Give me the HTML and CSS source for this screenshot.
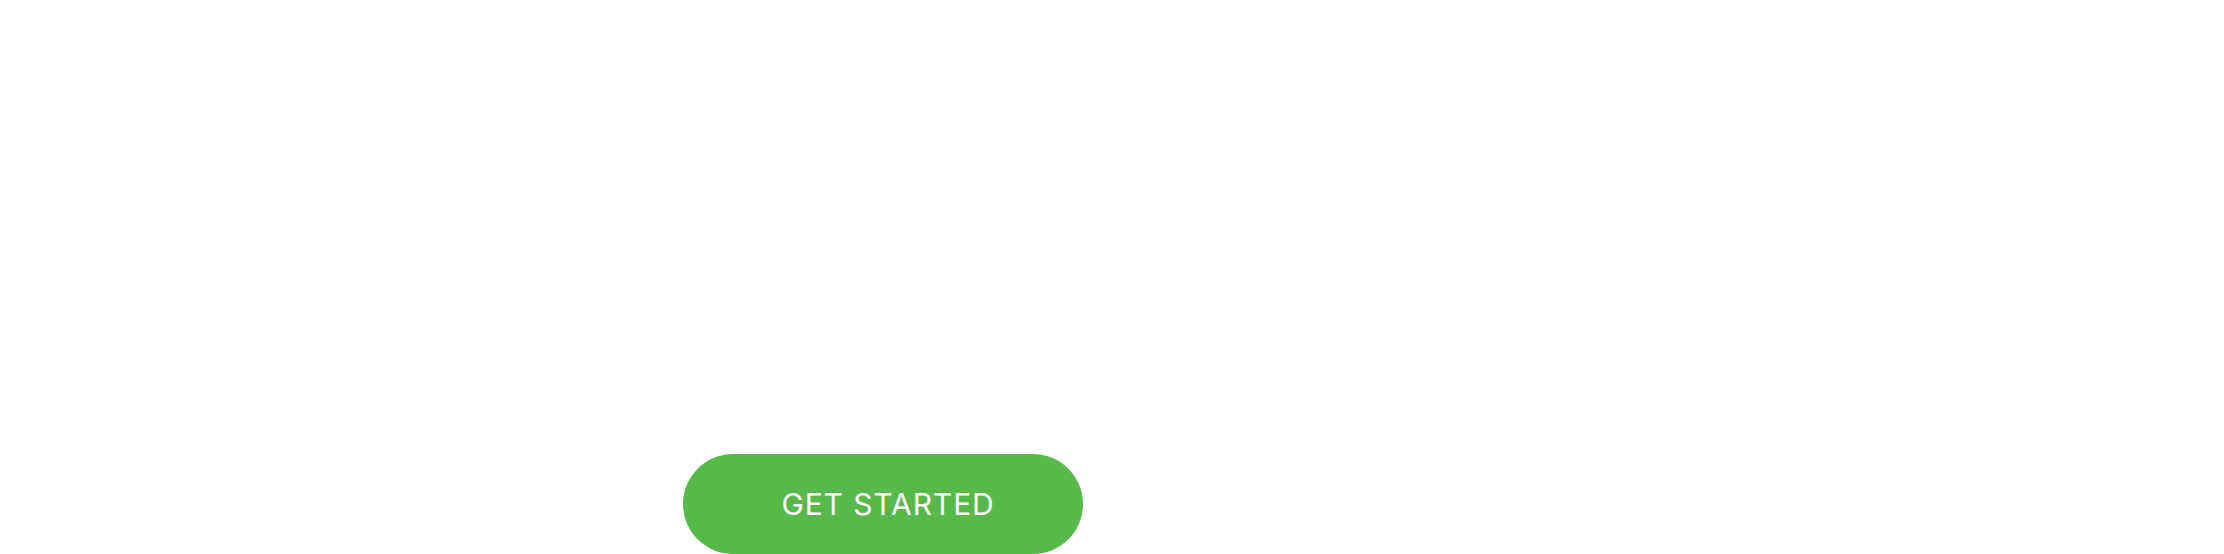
FILE: index.html
```html
<!DOCTYPE html>
<html lang="en">
<head>
<meta charset="utf-8">
<title>Get started</title>
<link rel="stylesheet" href="styles.css">
</head>
<body>
<main class="hero">
  <div class="hero-space"></div>
  <div class="actions">
    <a class="btn-primary" href="#">GET STARTED</a>
  </div>
</main>
</body>
</html>
```

FILE: styles.css
```css
html, body {
  margin: 0;
  padding: 0;
  background: #ffffff;
}
body {
  font-family: Inter, Roboto, "Noto Sans", sans-serif;
  overflow: hidden;
}
.hero {
  display: flex;
  flex-direction: column;
  width: 2224px;
  height: 554px;
}
.hero-space {
  height: 454px;
  flex: none;
}
.actions {
  display: flex;
  padding-left: 683px;
}
.btn-primary {
  display: flex;
  align-items: center;
  justify-content: center;
  box-sizing: border-box;
  width: 400px;
  height: 100px;
  padding-left: 10px;
  border-radius: 50px;
  background: #57b94a;
  color: #ffffff;
  font-size: 30px;
  font-weight: 400;
  letter-spacing: 0.9px;
  text-decoration: none;
}
```
